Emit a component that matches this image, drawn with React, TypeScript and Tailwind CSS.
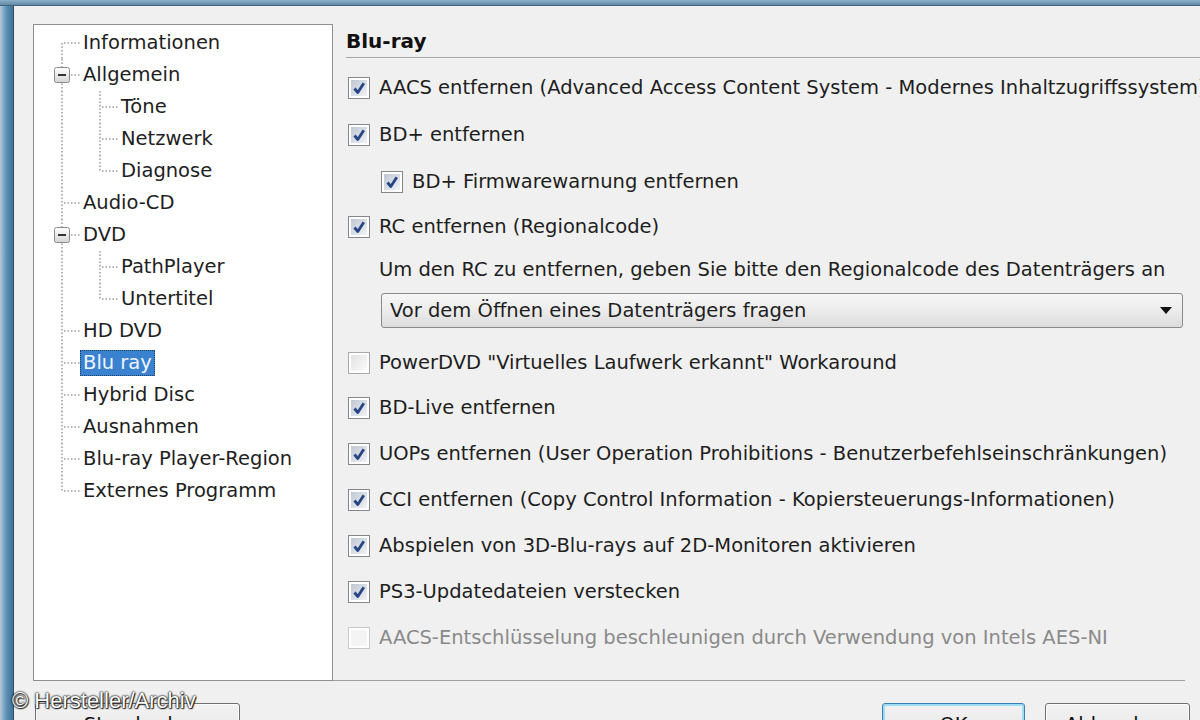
import React from "react";

type TreeItem = {
  label: string;
  level: 0 | 1;
  v0: "full" | "top" | "bottom";
  v1?: "full" | "top";
  expander?: boolean;
  selected?: boolean;
};

const tree: TreeItem[] = [
  { label: "Informationen", level: 0, v0: "bottom" },
  { label: "Allgemein", level: 0, v0: "full", expander: true },
  { label: "Töne", level: 1, v0: "full", v1: "full" },
  { label: "Netzwerk", level: 1, v0: "full", v1: "full" },
  { label: "Diagnose", level: 1, v0: "full", v1: "top" },
  { label: "Audio-CD", level: 0, v0: "full" },
  { label: "DVD", level: 0, v0: "full", expander: true },
  { label: "PathPlayer", level: 1, v0: "full", v1: "full" },
  { label: "Untertitel", level: 1, v0: "full", v1: "top" },
  { label: "HD DVD", level: 0, v0: "full" },
  { label: "Blu ray", level: 0, v0: "full", selected: true },
  { label: "Hybrid Disc", level: 0, v0: "full" },
  { label: "Ausnahmen", level: 0, v0: "full" },
  { label: "Blu-ray Player-Region", level: 0, v0: "full" },
  { label: "Externes Programm", level: 0, v0: "top" },
];

const DOT = { stroke: "#9a9a9a", strokeWidth: 1.5, strokeDasharray: "1.5 2" };

function Gutter({ item }: { item: TreeItem }) {
  const w = 48 + 38 * item.level;
  const y0 = item.v0 === "bottom" ? 16 : 0;
  const y1 = item.v0 === "top" ? 16 : 32;
  const hx = item.level === 0 ? 28 : 66;
  return (
    <svg width={w} height={32} className="shrink-0">
      <line x1={28} y1={y0} x2={28} y2={y1} {...DOT} />
      {item.v1 && <line x1={66} y1={0} x2={66} y2={item.v1 === "top" ? 16 : 32} {...DOT} />}
      <line x1={hx + 2} y1={16} x2={hx + 18} y2={16} {...DOT} />
      {item.expander && (
        <g>
          <defs>
            <linearGradient id="exp" x1="0" y1="0" x2="0" y2="1">
              <stop offset="0" stopColor="#ffffff" />
              <stop offset="1" stopColor="#d4d4d4" />
            </linearGradient>
          </defs>
          <rect x={20.5} y={8.5} width={15} height={15} rx={2} fill="url(#exp)" stroke="#8b8b8b" />
          <line x1={24} y1={16} x2={32} y2={16} stroke="#333" strokeWidth={2} />
        </g>
      )}
    </svg>
  );
}

function Tree() {
  return (
    <div className="w-[300px] h-[657px] shrink-0 bg-white border border-[#8e8f8f] pt-[2px]">
      {tree.map((item) => (
        <div key={item.label} className="flex items-center h-[32px]">
          <Gutter item={item} />
          {item.selected ? (
            <span className="ml-[-2px] px-[2px] h-[26px] leading-[24px] bg-[#3a82d0] text-[#eef4ff] border border-dotted border-[#1c3f66]">
              {item.label}
            </span>
          ) : (
            <span className="ml-[1px] whitespace-nowrap">{item.label}</span>
          )}
        </div>
      ))}
    </div>
  );
}

function Check({ checked, state }: { checked: boolean; state?: "off" | "disabled" }) {
  const border = state === "disabled" ? "border-[#c9c9c9]" : checked ? "border-[#85878a]" : "border-[#a9a9a9]";
  const inner = state === "disabled" ? "from-[#f4f4f4] to-[#f4f4f4]" : checked ? "from-[#bfc7d3] to-[#f1f3f6]" : "from-[#e2e2e2] to-[#fbfbfb]";
  return (
    <span className={`w-[22px] h-[22px] shrink-0 border ${border} bg-white p-[2px]`}>
      <span className={`block w-full h-full bg-gradient-to-br ${inner}`}>
        {checked && (
          <svg width="16" height="16" viewBox="0 0 16 16">
            <path d="M3.5 8.5 L6.8 12.5 L12.8 3.2" fill="none" stroke="#284583" strokeWidth="2.8" strokeLinejoin="round" />
          </svg>
        )}
      </span>
    </span>
  );
}

function Row({
  label,
  checked = true,
  indent,
  disabled,
  h = "h-[46px]",
}: {
  label: string;
  checked?: boolean;
  indent?: boolean;
  disabled?: boolean;
  h?: string;
}) {
  return (
    <div className={`flex items-center gap-[9px] ${h} ${indent ? "pl-[35px]" : "pl-[2px]"}`}>
      <Check checked={checked} state={disabled ? "disabled" : checked ? undefined : "off"} />
      <span className={`whitespace-nowrap ${disabled ? "text-[#8a8a8a]" : ""}`}>{label}</span>
    </div>
  );
}

function Settings() {
  return (
    <div className="flex-1 min-w-0 h-[657px] border-b border-[#a0a0a0] pl-[13px]">
      <div className="h-[34px] mr-[-20px] flex items-center border-b border-[#a8a8a8] font-bold text-[20px] text-[#111]">
        Blu-ray
      </div>
      <div className="mt-[6px]">
        <Row label="AACS entfernen (Advanced Access Content System - Modernes Inhaltzugriffssystem)" h="h-[47px]" />
        <Row label="BD+ entfernen" h="h-[47px]" />
        <Row label="BD+ Firmwarewarnung entfernen" indent h="h-[47px]" />
        <Row label="RC entfernen (Regionalcode)" h="h-[44px]" />
        <div className="h-[42px] flex items-center pl-[33px] whitespace-nowrap">
          Um den RC zu entfernen, geben Sie bitte den Regionalcode des Datenträgers an
        </div>
        <div className="ml-[35px] mr-[2px] mt-[2px] h-[35px] rounded-[3px] border border-[#8a8a8a] bg-gradient-to-b from-[#f6f6f6] via-[#ececec] to-[#dcdcdc] flex items-center justify-between pl-[8px] pr-[10px]">
          <span className="whitespace-nowrap">Vor dem Öffnen eines Datenträgers fragen</span>
          <svg width="12" height="8" viewBox="0 0 12 8">
            <path d="M0 0 H12 L6 7 Z" fill="#111" />
          </svg>
        </div>
        <div className="mt-[12px]">
          <Row label={'PowerDVD "Virtuelles Laufwerk erkannt" Workaround'} checked={false} h="h-[45px]" />
          <Row label="BD-Live entfernen" />
          <Row label="UOPs entfernen (User Operation Prohibitions - Benutzerbefehlseinschränkungen)" />
          <Row label="CCI entfernen (Copy Control Information - Kopiersteuerungs-Informationen)" />
          <Row label="Abspielen von 3D-Blu-rays auf 2D-Monitoren aktivieren" />
          <Row label="PS3-Updatedateien verstecken" />
          <Row label="AACS-Entschlüsselung beschleunigen durch Verwendung von Intels AES-NI" checked={false} disabled />
        </div>
      </div>
    </div>
  );
}

function Button({ label, w, primary }: { label: string; w: string; primary?: boolean }) {
  return (
    <div
      className={`${w} shrink-0 h-[44px] rounded-[3px] border ${
        primary ? "border-[#3c7fb1] shadow-[inset_0_0_0_2px_#9fdcf5]" : "border-[#707070] shadow-[inset_0_0_0_1px_#fbfbfb]"
      } bg-gradient-to-b from-[#f2f2f2] via-[#ebebeb] to-[#d6d6d6] flex items-center justify-center text-[#111]`}
    >
      {label}
    </div>
  );
}

export default function App() {
  return (
    <div
      className="relative w-[1200px] h-[720px] overflow-hidden bg-[#f0f0f0] flex flex-col text-[19.5px] text-[#1e1e1e]"
      style={{ fontFamily: '"DejaVu Sans", Verdana, sans-serif' }}
    >
      <div className="h-[6px] shrink-0 bg-gradient-to-b from-[#8fb1c9] to-[#5d8aa8] border-b border-[#46657a]" />
      <div className="flex flex-1 min-w-0">
        <div className="w-[14px] shrink-0 bg-gradient-to-r from-[#b3c9d8] via-[#5b8fb3] to-[#3e7399] border-r border-[#324f63]" />
        <div className="flex-1 min-w-0 flex flex-col">
          <div className="flex pl-[19px] pt-[18px] pr-[15px]">
            <Tree />
            <Settings />
          </div>
          <div className="flex items-start pt-[22px] pl-[21px] pr-[10px]">
            <Button label="Standard..." w="w-[205px]" />
            <div className="flex-1" />
            <Button label="OK" w="w-[143px]" primary />
            <div className="w-[20px] shrink-0" />
            <Button label="Abbrechen" w="w-[145px]" />
          </div>
        </div>
      </div>
      <div
        className="absolute left-[12px] top-[684px] text-[22px] text-white [text-shadow:0_0_2px_#000,0_0_2px_#000,1px_1px_1px_#333]"
        style={{ fontFamily: '"Liberation Sans", Arial, sans-serif' }}
      >
        © Hersteller/Archiv
      </div>
    </div>
  );
}
